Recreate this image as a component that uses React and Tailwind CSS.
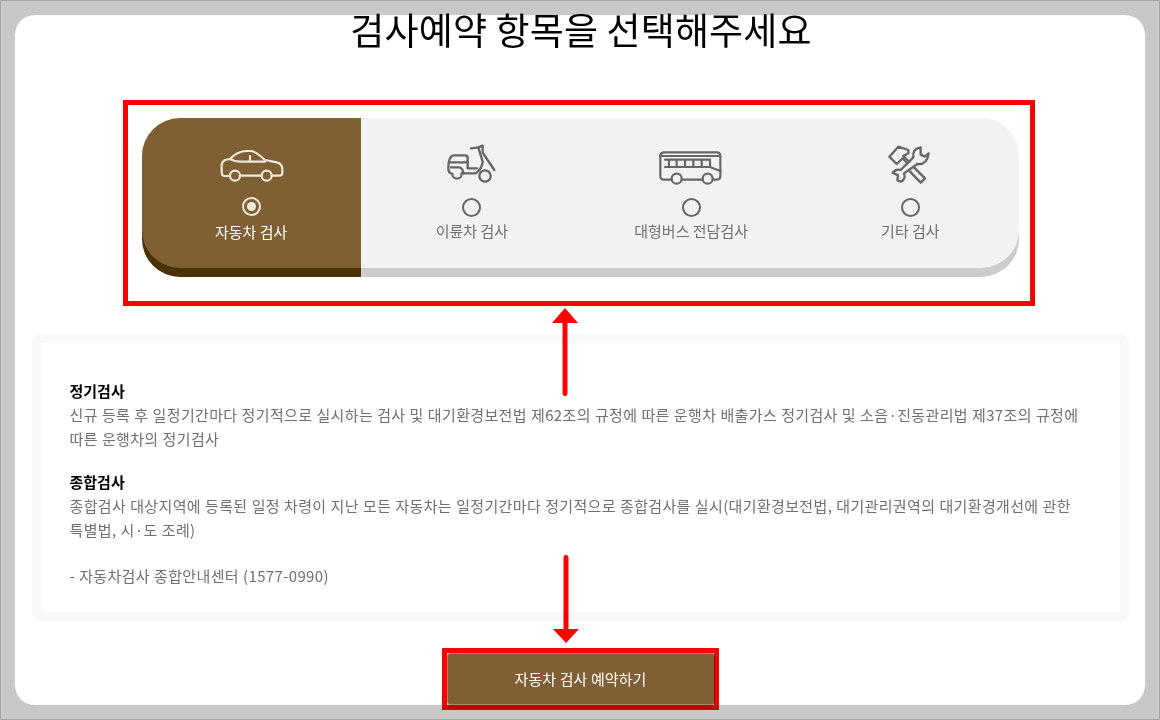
const fontStack = "font-['Noto_Sans_CJK_KR','Noto_Sans',sans-serif]";

// icons are traced at 3x, so the viewBox is three times the drawn size
function CarIcon() {
  return (
    <svg className="mt-[27px]" width="72" height="42" viewBox="0 0 216 126" fill="none" stroke="currentColor" strokeWidth="6.5" strokeLinecap="round" strokeLinejoin="round">
      <path d="M45 93H28Q20 93 20 82V62Q20 50 30 45L45 42Q68 18 95 18H110Q125 22 150 45L185 52Q202 56 202 72V85Q202 92 192 92H170M140 92H75" />
      <path d="M45 42Q60 50 75 50H150M105 33V48" />
      <circle cx="60" cy="92" r="15" />
      <circle cx="155" cy="92" r="15" />
    </svg>
  );
}

function ScooterIcon() {
  return (
    <svg className="ml-[-2px] mt-[22px]" width="60" height="50" viewBox="0 0 180 150" fill="none" stroke="currentColor" strokeWidth="7" strokeLinecap="round" strokeLinejoin="round">
      <path d="M90 25L112 22L125 17V38L160 90" />
      <path d="M112 22L125 65Q124 85 105 100H62" />
      <path d="M30 100Q22 98 22 85Q22 60 30 50Q32 46 40 46H72Q80 46 80 54V85H108" />
      <path d="M28 67H80M30 82H55Q65 84 68 100" />
      <path d="M34 102A14 14 0 0 0 62 102" />
      <circle cx="132" cy="108" r="17" />
    </svg>
  );
}

function BusIcon() {
  return (
    <svg className="mt-[29px]" width="72" height="42" viewBox="0 0 216 126" fill="none" stroke="currentColor" strokeWidth="6.5" strokeLinecap="round" strokeLinejoin="round">
      <path d="M50 98H28Q16 98 16 88V28Q16 16 28 16H185Q196 16 196 28V88Q196 98 185 98H173M143 98H80" />
      <path d="M16 27H196M30 60H165L196 72M30 38H165M42 38V60M65 38V60M90 38V60M115 38V60M140 38V60M165 38V60" />
      <circle cx="65" cy="95" r="15" />
      <circle cx="158" cy="95" r="15" />
    </svg>
  );
}

function ToolsIcon() {
  return (
    <svg className="mt-[22px]" width="60" height="50" viewBox="0 0 180 150" fill="none" stroke="currentColor" strokeWidth="7" strokeLinecap="round" strokeLinejoin="round">
      <path d="M70 48L85 40V30L55 20L28 50L50 72L68 55L78 66" />
      <path d="M70 48L88 66M102 82L135 115L122 128L90 95" />
      <path d="M122 22Q97 26 100 52L62 90Q48 86 38 98L54 106L52 120Q66 132 74 112Q74 106 72 100L112 72Q140 76 146 40L134 50L122 44Z" />
    </svg>
  );
}

function Radio({ checked }) {
  return (
    <span className={`flex h-[19px] w-[19px] items-center justify-center rounded-full border-2 ${checked ? "border-[#efe9df]" : "border-[#666666]"}`}>
      {checked && <span className="h-[9px] w-[9px] rounded-full bg-[#efe9df]" />}
    </span>
  );
}

function Tab({ icon, label, active }) {
  return (
    <div
      className={`flex h-[150px] flex-col items-center ${
        active ? "rounded-l-[38px] bg-[#7f5f33] text-[#efe9df] shadow-[0_9px_0_#4a3206]" : "pl-[3px] text-[#666666]"
      }`}
    >
      <div className={`flex items-start justify-center ${active ? "h-[79px]" : "h-[80px]"}`}>{icon}</div>
      <Radio checked={active} />
      <span className={`text-[15px] leading-[24px] ${active ? "mt-[4px] text-white" : "mt-[2px] text-[#707070]"}`}>{label}</span>
    </div>
  );
}

export default function App() {
  return (
    <div className={`relative h-[720px] w-[1160px] overflow-hidden border border-[#a3a3a3] bg-[#c8c8c8] ${fontStack}`}>
      <div className="ml-[14px] mt-[14px] flex h-[690px] w-[1130px] flex-col items-center rounded-[20px] bg-white">
        <h1 className="ml-[2px] mt-[-10px] text-[37px] font-normal leading-[48px] tracking-[0.15px] text-black">검사예약 항목을 선택해주세요</h1>

        <div className="mt-[65px] grid w-[877px] grid-cols-4 rounded-[38px] bg-[#f2f2f2] shadow-[0_9px_0_#cccccc]">
          <Tab active label="자동차 검사" icon={<CarIcon />} />
          <Tab label="이륜차 검사" icon={<ScooterIcon />} />
          <Tab label="대형버스 전담검사" icon={<BusIcon />} />
          <Tab label="기타 검사" icon={<ToolsIcon />} />
        </div>

        <div className="mt-[66px] h-[287px] w-[1097px] rounded-lg border-[9px] border-[#f8f8f8] px-[29px] pt-[36px] text-[15px] leading-[24px] tracking-[0.35px] text-[#707070] [word-spacing:0.4px]">
          <p className="font-bold tracking-normal text-black">정기검사</p>
          <p>
            신규 등록 후 일정기간마다 정기적으로 실시하는 검사 및 대기환경보전법 제62조의 규정에 따른 운행차 배출가스 정기검사 및 소음·진동관리법 제37조의 규정에
            <br />
            따른 운행차의 정기검사
          </p>
          <p className="mt-[19px] font-bold tracking-normal text-black">종합검사</p>
          <p>
            종합검사 대상지역에 등록된 일정 차령이 지난 모든 자동차는 일정기간마다 정기적으로 종합검사를 실시(대기환경보전법, 대기관리권역의 대기환경개선에 관한
            <br />
            특별법, 시·도 조례)
          </p>
          <p className="mt-[22px]">- 자동차검사 종합안내센터 (1577-0990)</p>
        </div>

        <button className="ml-[1px] mt-[32px] h-[52px] w-[268px] rounded-[3px] border border-[#a08a68] bg-[#7f5f33] text-[15px] tracking-[0.1px] text-white">
          자동차 검사 예약하기
        </button>
      </div>

      {/* red annotations drawn over the page */}
      <div className="absolute left-[122px] top-[99px] h-[206px] w-[912px] border-[5px] border-[#ff0000]" />
      <div className="absolute left-[441px] top-[647px] h-[62px] w-[277px] border-[5px] border-[#ff0000] mix-blend-multiply" />
      <svg className="absolute left-[550px] top-[307px]" width="28" height="90" viewBox="0 0 28 90" fill="#ff0000">
        <path d="M14 0L27 15H16.5V85Q16.5 88 14 88Q11.5 88 11.5 85V15H1Z" />
      </svg>
      <svg className="absolute left-[551px] top-[553px]" width="28" height="90" viewBox="0 0 28 90" fill="#ff0000">
        <path d="M14 89L1 75H11.5V4Q11.5 1 14 1Q16.5 1 16.5 4V75H27Z" />
      </svg>
    </div>
  );
}
